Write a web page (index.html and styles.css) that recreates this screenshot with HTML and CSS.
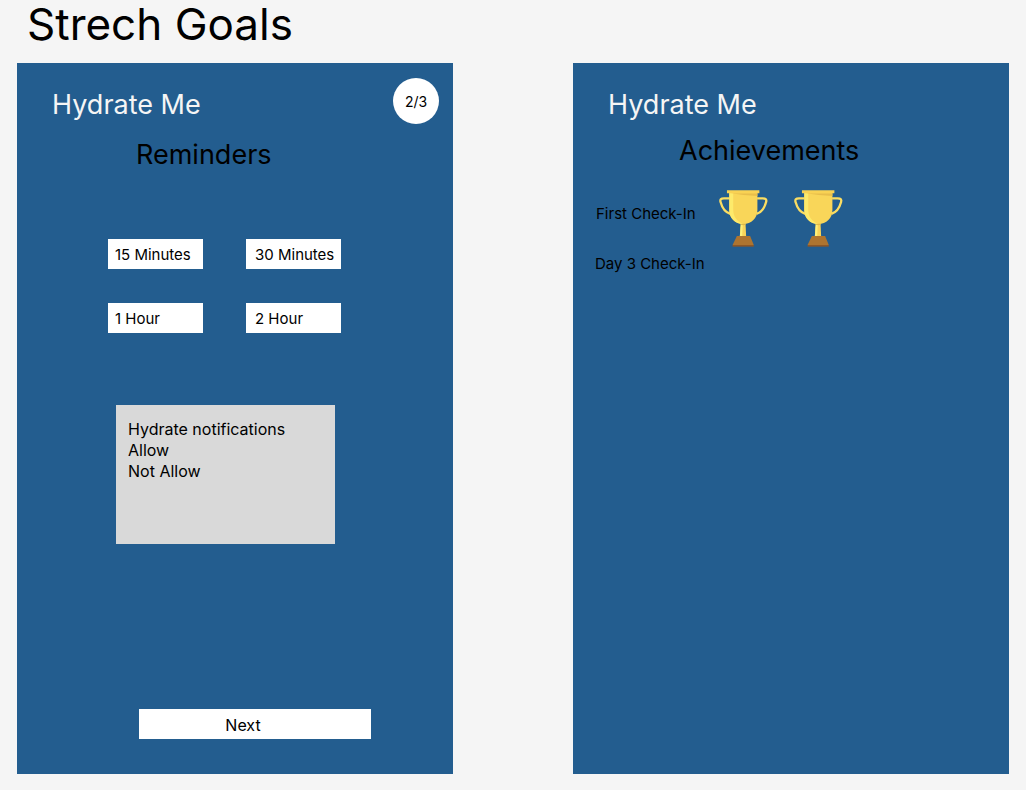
FILE: index.html
```html
<!DOCTYPE html>
<html lang="en">
<head>
<meta charset="utf-8">
<meta name="viewport" content="width=device-width, initial-scale=1">
<title>Strech Goals</title>
<link rel="stylesheet" href="styles.css">
</head>
<body>
<svg class="defs" aria-hidden="true">
  <symbol id="trophy" viewBox="26 32 148 172">
    <path d="M58 57H41Q27 57 31 69C35 84 44 99 60 104" fill="none" stroke="#fbdd62" stroke-width="7"/>
    <path d="M141 57H158Q172 57 168 69C164 84 155 99 139 104" fill="none" stroke="#fbdd62" stroke-width="7"/>
    <path d="M92 130H106L108 172H89Z" fill="#f8d45a"/>
    <path d="M92 130H98L96 172H89Z" fill="#fdf07a"/>
    <path d="M92 132H106V137Q99 140 92 137Z" fill="#dcb94c"/>
    <path d="M57 40H142V92C142 117 124 134 99 134C75 134 57 117 57 92Z" fill="#f9d659"/>
    <path d="M57 40H69V92C69 113 82 128 99 134C75 134 57 117 57 92Z" fill="#fdea6b"/>
    <path d="M62 42H142V50Q100 48 62 42Z" fill="#e8be4b"/>
    <path d="M50 33H148V42H50Z" fill="#f9d253"/>
    <path d="M80 171H120L131 198H67Z" fill="#ad7430"/>
    <path d="M67 198H131V203H67Z" fill="#8d5727"/>
  </symbol>
</svg>
<main class="page">
  <h1 class="page-title">Strech Goals</h1>
  <div class="screens">
    <section class="screen">
      <header class="screen-header">
        <p class="brand">Hydrate Me</p>
        <span class="badge">2/3</span>
      </header>
      <h2 class="heading heading-reminders">Reminders</h2>
      <div class="options">
        <button class="option" type="button">15 Minutes</button>
        <button class="option option-wide" type="button">30 Minutes</button>
        <button class="option" type="button">1 Hour</button>
        <button class="option option-wide" type="button">2 Hour</button>
      </div>
      <div class="notice">
        <p class="notice-title">Hydrate notifications</p>
        <button class="notice-action" type="button">Allow</button>
        <button class="notice-action" type="button">Not Allow</button>
      </div>
      <button class="next" type="button">Next</button>
    </section>
    <section class="screen">
      <header class="screen-header">
        <p class="brand">Hydrate Me</p>
      </header>
      <h2 class="heading heading-achievements">Achievements</h2>
      <ul class="achievements">
        <li class="achievement achievement-first">
          <span class="achievement-name">First Check-In</span>
          <svg class="trophy" role="img" aria-label="Trophy"><use href="#trophy"/></svg>
          <svg class="trophy" role="img" aria-label="Trophy"><use href="#trophy"/></svg>
        </li>
        <li class="achievement">Day 3 Check-In</li>
      </ul>
    </section>
  </div>
</main>
</body>
</html>
```
FILE: styles.css
```css
* {
  box-sizing: border-box;
}

body {
  margin: 0;
  background: #f5f5f5;
  color: #000;
  font-family: Inter, "Liberation Sans", sans-serif;
  font-size: 15px;
}

h1, h2, p, ul {
  margin: 0;
  padding: 0;
  font-weight: 400;
}

button {
  border: 0;
  margin: 0;
  color: inherit;
  font: inherit;
  text-align: left;
  cursor: pointer;
}

.defs {
  display: none;
}

.page {
  display: flex;
  flex-direction: column;
  min-height: 100vh;
  padding: 0 17px 16px;
}

.page-title {
  padding: 0 0 15px 10px;
  font-size: 44px;
  line-height: 48px;
}

.screens {
  display: grid;
  flex: 1;
  grid-template-columns: 1fr 1fr;
  gap: 120px;
}

.screen {
  display: flex;
  flex-direction: column;
  align-items: flex-start;
  padding: 15px 14px 35px 22px;
  background: #235d8f;
}

.screen-header {
  display: flex;
  align-items: flex-start;
  justify-content: space-between;
  align-self: stretch;
  min-height: 46px;
}

.brand {
  padding: 10px 0 0 13px;
  color: #f5f5f5;
  font-size: 27px;
  line-height: 34px;
}

.badge {
  display: grid;
  place-items: center;
  width: 46px;
  height: 46px;
  border-radius: 50%;
  background: #fff;
  font-size: 14px;
}

.heading {
  font-size: 27px;
  line-height: 34px;
}

.heading-reminders {
  margin: 14px 0 0 97px;
}

.heading-achievements {
  margin: 10px 0 0 84px;
}

.options {
  display: grid;
  grid-template-columns: 95px 95px;
  grid-auto-rows: 30px;
  gap: 34px 43px;
  margin: 67px 0 0 69px;
}

.option {
  padding: 0 0 0 7px;
  background: #fff;
  white-space: nowrap;
}

.option-wide {
  padding-left: 9px;
}

.notice {
  display: flex;
  flex-direction: column;
  align-items: flex-start;
  width: 219px;
  min-height: 139px;
  margin: 72px 0 0 77px;
  padding: 14px 12px;
  background: #d9d9d9;
  font-size: 16px;
  line-height: 21px;
}

.notice-action {
  padding: 0;
  background: none;
}

.next {
  width: 232px;
  height: 30px;
  margin: auto 0 0 100px;
  padding: 1px 24px 0 0;
  background: #fff;
  font-size: 16px;
  text-align: center;
}

.achievements {
  margin-top: 22px;
  list-style: none;
}

.achievement {
  line-height: 18px;
}

.achievement-first {
  display: flex;
  gap: 26px;
  margin-bottom: 8px;
}

.achievement-name {
  width: 98px;
  padding: 15px 0 0 1px;
  white-space: nowrap;
}

.trophy {
  width: 49px;
  height: 57px;
}
```
